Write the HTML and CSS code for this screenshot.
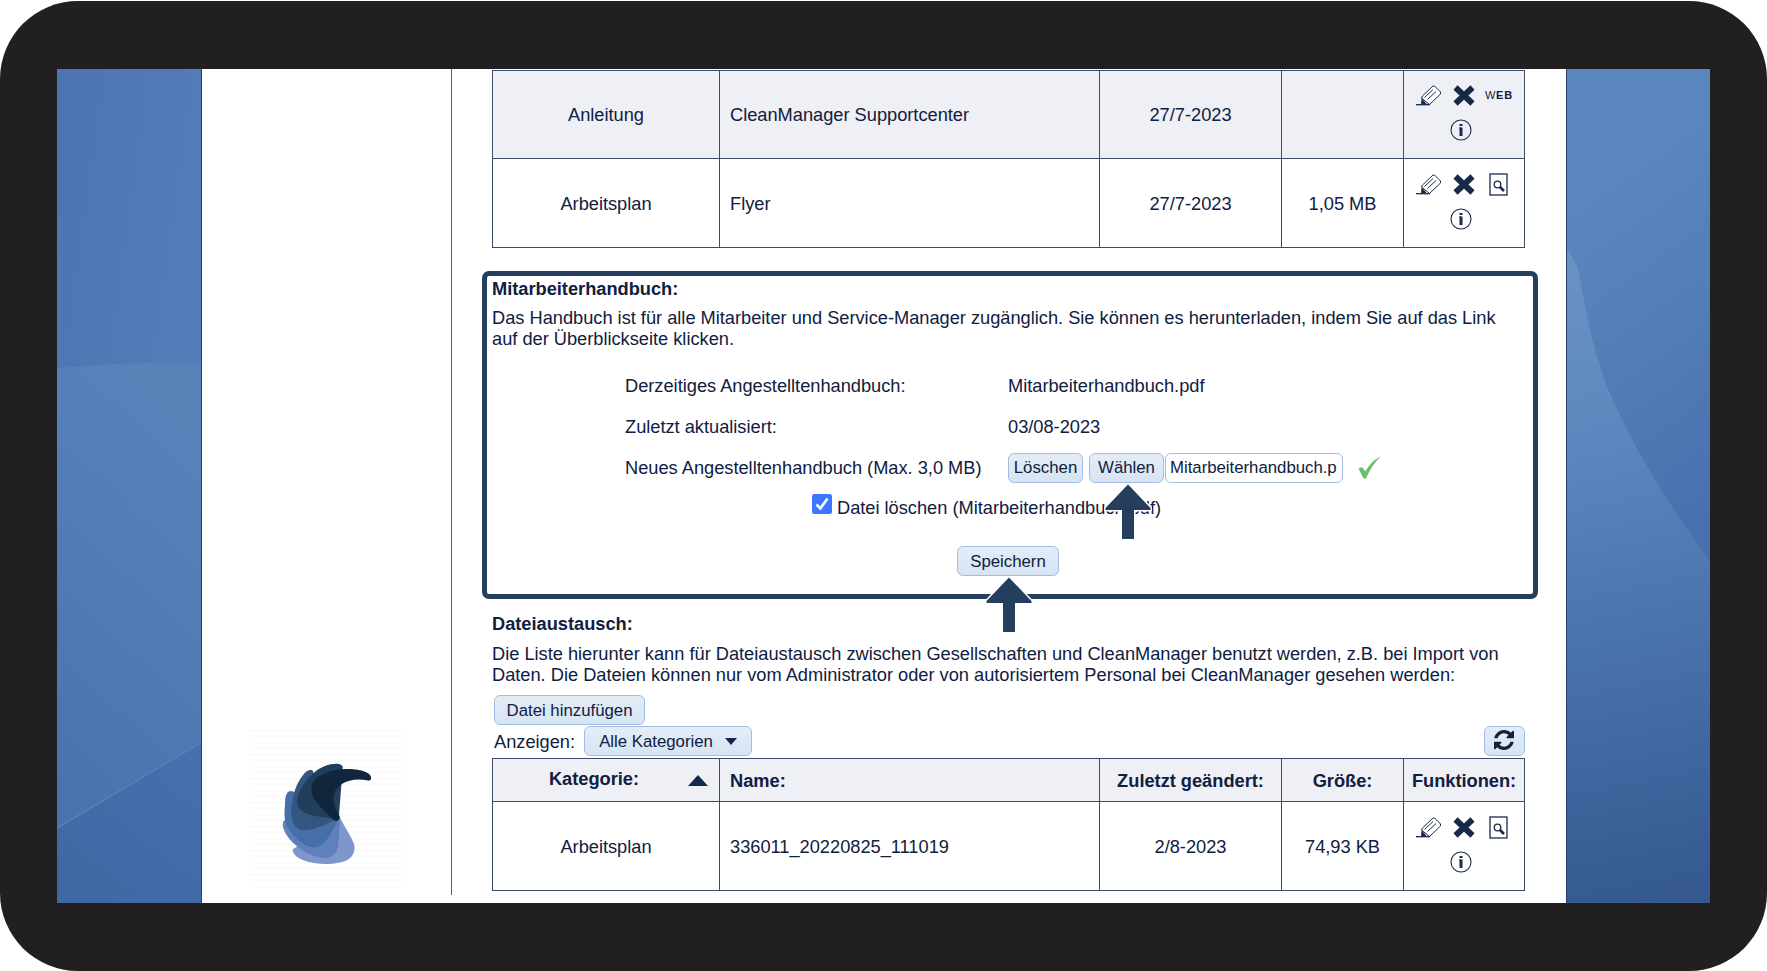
FILE: index.html
```
<!DOCTYPE html>
<html lang="de">
<head>
    <meta charset="UTF-8">
    <title>CleanManager - Dateien</title>
    <link rel="stylesheet" href="styles.css">
</head>
<body>

<svg class="symbols" width="0" height="0">
    <symbol id="edit" viewBox="0 0 25 21">
        <path d="M5.500 13 L6.500 11 L17 1 H18.500 L24.500 7 V9 L13.500 19.500 Z" fill="#fff" stroke="#1a2c4a" stroke-width="1"/>
        <path d="M8.500 12.500 L17 4.500 M11.500 14.500 L20 6.500" fill="none" stroke="#1a2c4a" stroke-width="1"/>
        <path d="M0 19.700 H14" stroke="#1a2c4a" stroke-width="1.300"/>
        <path d="M5.500 13 L11 19.500 H5 Z" fill="#1a2c4a"/>
    </symbol>
    <symbol id="delete" viewBox="0 0 22 21">
        <path d="M2.500 2.500 L19.500 18.500 M19.500 2.500 L2.500 18.500" fill="none" stroke="#172a45" stroke-width="6"/>
    </symbol>
    <symbol id="view" viewBox="0 0 19 23">
        <rect x="1" y="1" width="17" height="21" fill="#fff" stroke="#1a2c4a" stroke-width="1.300"/>
        <circle cx="8.500" cy="11.500" r="3.300" fill="none" stroke="#1a2c4a" stroke-width="1.300"/>
        <path d="M11 14 L15 18" stroke="#1a2c4a" stroke-width="2.600"/>
    </symbol>
    <symbol id="info" viewBox="0 0 22 22">
        <circle cx="11" cy="11" r="10" fill="none" stroke="#1a2c4a" stroke-width="1.100"/>
        <path d="M11 5 V7 M11 8.500 V17" fill="none" stroke="#1a2c4a" stroke-width="3"/>
        <path d="M9 9 H11" fill="none" stroke="#1a2c4a" stroke-width="1"/>
    </symbol>
    <symbol id="arrow" viewBox="0 0 50 60">
        <path d="M25 2.500 L47.500 26 V28 H31 V57 H19 V28 H2.500 V26 Z" fill="#263e5e" stroke="#fff" stroke-width="3" stroke-linejoin="round" paint-order="stroke"/>
    </symbol>
</svg>

<div class="tablet">
    <div class="screen">
        <div class="wallpaper wallpaper-left">
            <svg width="145" height="834" viewBox="0 0 145 834">
                <defs>
                    <linearGradient id="l1" x1="0" y1="0" x2="1" y2="0.300"><stop offset="0" stop-color="#4b74b1"/><stop offset="1" stop-color="#547cb9"/></linearGradient>
                    <linearGradient id="l2" x1="0.600" y1="0" x2="0.300" y2="1"><stop offset="0" stop-color="#5883b9"/><stop offset="0.500" stop-color="#527bb4"/><stop offset="1" stop-color="#4a73ac"/></linearGradient>
                    <linearGradient id="l3" x1="1" y1="0" x2="0.300" y2="1"><stop offset="0" stop-color="#4670af"/><stop offset="1" stop-color="#4068a3"/></linearGradient>
                </defs>
                <rect width="145" height="320" fill="url(#l1)"/>
                <path d="M0 299 Q70 293 145 294 V680 L0 766 Z" fill="url(#l2)"/>
                <path d="M0 759 L145 673 V834 H0 Z" fill="url(#l3)"/>
                <path d="M0 759 L145 673" stroke="#5781b8" stroke-width="1.500"/>
            </svg>
        </div>
        <div class="page">
            <div class="sidebar">
                <div class="logo">
                    <svg width="91" height="104" viewBox="0 0 90 102" preserveAspectRatio="none">
                        <path d="M13 83 C8 84 11 91 20 95 C35 101 56 100 65 95 C71 91 73 85 71 79 C68 71 62 63 57 53 Z" fill="#7d97ca"/>
                        <path d="M3 56 C-2 58 1 70 14 81 C24 90 37 94 45 93 C53 91 56 86 56 76 C57 68 57 62 57 54 Z" fill="#5f80bd"/>
                        <path d="M11 28 C6 26 3 30 3 40 C2 52 2 59 8 67 C17 79 28 85 37 82 C46 76 51 65 56 55 Z" fill="#456fa6"/>
                        <path d="M31 9 C30 5 25 6 20 13 C14 21 11 30 10 40 C8 52 10 66 22 66 C34 66 46 58 56 55 Z" fill="#335680"/>
                        <path d="M60 5 C61 -2 42 0 31 10 C20 20 12 34 16 43 C20 50 32 53 42 53 L56 56 Z" fill="#213e5d"/>
                        <path d="M88 16 C90 10 78 6 66 6 C46 6 28 14 29 27 C30 38 44 48 51 56 C54 58 58 56 57 52 C53 45 50 39 51 32 C53 21 67 14 84 17 C86 18 87 17 88 16 Z" fill="#11263c"/>
                    </svg>
                </div>
            </div>
            <div class="content">
                <table class="files files-top">
                    <tr class="shaded">
                        <td class="category">Anleitung</td>
                        <td class="name">CleanManager Supportcenter</td>
                        <td class="date">27/7-2023</td>
                        <td class="size"></td>
                        <td class="functions">
                            <div class="icons"><svg class="edit"><use href="#edit"/></svg><svg class="delete"><use href="#delete"/></svg><span class="web"><span class="thin">W</span>EB</span></div>
                            <svg class="info"><use href="#info"/></svg>
                        </td>
                    </tr>
                    <tr class="last">
                        <td class="category">Arbeitsplan</td>
                        <td class="name">Flyer</td>
                        <td class="date">27/7-2023</td>
                        <td class="size">1,05 MB</td>
                        <td class="functions">
                            <div class="icons"><svg class="edit"><use href="#edit"/></svg><svg class="delete"><use href="#delete"/></svg><svg class="view"><use href="#view"/></svg></div>
                            <svg class="info"><use href="#info"/></svg>
                        </td>
                    </tr>
                </table>

                <div class="handbook">
                    <h3>Mitarbeiterhandbuch:</h3>
                    <p>Das Handbuch ist für alle Mitarbeiter und Service-Manager zugänglich. Sie können es herunterladen, indem Sie auf das Link<br>auf der Überblickseite klicken.</p>
                    <div class="form">
                        <div class="row"><span class="label">Derzeitiges Angestelltenhandbuch:</span><span>Mitarbeiterhandbuch.pdf</span></div>
                        <div class="row"><span class="label">Zuletzt aktualisiert:</span><span>03/08-2023</span></div>
                        <div class="row">
                            <span class="label">Neues Angestelltenhandbuch (Max. 3,0 MB)</span>
                            <button class="btn btn-clear">Löschen</button>
                            <div class="choose">
                                <button class="btn btn-choose">Wählen</button>
                                <svg class="arrow"><use href="#arrow"/></svg>
                            </div>
                            <span class="filename">Mitarbeiterhandbuch.p</span>
                            <svg class="ok" width="23" height="23" viewBox="0 0 23 23"><path d="M0.500 12.500 L4 11 L7.500 15.500 C11 9 16 3.500 22.500 0.500 C16 7 11.500 14 8 22.500 H5.500 Z" fill="#6cbd6c"/></svg>
                        </div>
                    </div>
                    <div class="remove">
                        <svg width="20" height="20" viewBox="0 0 20 20"><rect width="20" height="20" rx="2.500" fill="#3b78ff"/><path d="M4.500 10.500 L8.300 14.500 L15.500 4.500" fill="none" stroke="#fff" stroke-width="2.700"/></svg>
                        <span>Datei löschen (Mitarbeiterhandbuch.pdf)</span>
                    </div>
                    <div class="save">
                        <button class="btn btn-save">Speichern</button>
                        <svg class="arrow"><use href="#arrow"/></svg>
                    </div>
                </div>

                <div class="exchange">
                    <h3>Dateiaustausch:</h3>
                    <p>Die Liste hierunter kann für Dateiaustausch zwischen Gesellschaften und CleanManager benutzt werden, z.B. bei Import von<br>Daten. Die Dateien können nur vom Administrator oder von autorisiertem Personal bei CleanManager gesehen werden:</p>
                    <button class="btn btn-add">Datei hinzufügen</button>
                    <div class="filter">
                        <span>Anzeigen:</span>
                        <button class="btn btn-category">Alle Kategorien <svg width="12" height="7" viewBox="0 0 12 7"><path d="M0 0 H12 L6 7 Z" fill="#14284b"/></svg></button>
                        <button class="btn btn-refresh">
                            <svg width="20" height="20" viewBox="0 0 1536 1536"><path fill="#10213b" d="M1511 928q0 5-1 7-64 268-268 434.500T764 1536q-146 0-282.500-55T238 1324l-129 129q-19 19-45 19t-45-19-19-45V960q0-26 19-45t45-19h448q26 0 45 19t19 45-19 45l-137 137q71 66 161 102t187 36q134 0 250-65t186-179q11-17 53-117 8-23 30-23h192q13 0 22.500 9.500t9.500 22.500zm25-800v448q0 26-19 45t-45 19h-448q-26 0-45-19t-19-45 19-45l138-138Q969 256 768 256q-134 0-250 65T332 500q-11 17-53 117-8 23-30 23H50q-13 0-22.500-9.500T18 608v-7q65-268 270-434.500T768 0q146 0 284 55.500T1297 212l130-129q19-19 45-19t45 19 19 45z"/></svg>
                        </button>
                    </div>
                </div>

                <table class="files">
                    <tr class="shaded head">
                        <th class="category"><div class="sort"><span>Kategorie:</span><svg width="20" height="11" viewBox="0 0 20 11"><path d="M0 11 L10 0 L20 11 Z" fill="#14284b"/></svg></div></th>
                        <th class="name">Name:</th>
                        <th class="date">Zuletzt geändert:</th>
                        <th class="size">Größe:</th>
                        <th class="functions-head">Funktionen:</th>
                    </tr>
                    <tr class="last">
                        <td class="category">Arbeitsplan</td>
                        <td class="name">336011_20220825_111019</td>
                        <td class="date">2/8-2023</td>
                        <td class="size">74,93 KB</td>
                        <td class="functions">
                            <div class="icons"><svg class="edit"><use href="#edit"/></svg><svg class="delete"><use href="#delete"/></svg><svg class="view"><use href="#view"/></svg></div>
                            <svg class="info"><use href="#info"/></svg>
                        </td>
                    </tr>
                </table>
            </div>
        </div>
        <div class="wallpaper">
            <svg width="144" height="834" viewBox="0 0 144 834">
                <defs>
                    <linearGradient id="r1" gradientUnits="userSpaceOnUse" x1="0" y1="150" x2="190" y2="420"><stop offset="0" stop-color="#5a85bf"/><stop offset="0.500" stop-color="#527cb5"/><stop offset="1" stop-color="#4770ad"/></linearGradient>
                    <linearGradient id="r2" gradientUnits="userSpaceOnUse" x1="0" y1="190" x2="130" y2="834"><stop offset="0" stop-color="#6b92c5"/><stop offset="0.300" stop-color="#5b86bd"/><stop offset="0.600" stop-color="#4971ab"/><stop offset="1" stop-color="#34588f"/></linearGradient>
                </defs>
                <rect width="144" height="834" fill="url(#r1)"/>
                <path d="M0 181 Q9 192 12 204 C18 240 28 290 44 327 C72 390 105 440 144 493 V834 H0 Z" fill="url(#r2)"/>
            </svg>
        </div>
    </div>
</div>

</body>
</html>
```
FILE: styles.css
```
* {
    box-sizing: border-box;
}
body {
    margin: 0;
    height: 971px;
    padding-top: 1px;
    background-color: #fff;
    font-family: "Liberation Sans", Arial, sans-serif;
    font-size: 18.25px;
    line-height: 21px;
    letter-spacing: -0.015px;
    color: #10203f;
    overflow: hidden;
}
svg {
    display: block;
    flex: none;
}
.symbols {
    position: absolute;
}
.tablet {
    height: 970px;
    padding: 68px 57px;
    border-radius: 78px;
    background-color: #221f20;
}
.screen {
    display: flex;
    height: 834px;
    overflow: hidden;
}
.wallpaper {
    width: 143px;
    overflow: hidden;
}
.wallpaper-left {
    width: 144px;
}
.page {
    display: flex;
    flex: 1;
    border-left: 1px solid #263f66;
    border-right: 1px solid #263f66;
    background-color: #fff;
}
.sidebar {
    display: flex;
    align-items: flex-end;
    width: 250px;
    height: 826px;
    padding: 0 0 4px 48px;
    border-right: 1px solid #526078;
}
.logo {
    width: 151px;
    height: 162px;
    padding: 34px 0 0 32px;
    background: repeating-linear-gradient(#fcfcfc 0, #fcfcfc 3px, #fff 3px, #fff 6px);
}
.content {
    width: 1074px;
    padding: 1px 0 0 30px;
}
.files {
    width: 1033px;
    margin-left: 10px;
    border-collapse: collapse;
    table-layout: fixed;
}
.files td, .files th {
    height: 88px;
    padding: 0 9px;
    border: 1px solid #3c4b69;
    text-align: center;
}
.files .last td {
    height: 89px;
}
.files .head th {
    height: 43px;
}
.shaded {
    background-color: #efeff6;
}
.category {
    width: 227px;
}
.files .name {
    width: 380px;
    padding-left: 10px;
    text-align: left;
}
.date {
    width: 182px;
}
.size {
    width: 122px;
}
.files .functions {
    padding: 0 0 4px 12px;
}
.files .functions-head {
    padding: 0;
}
.icons {
    display: flex;
    align-items: center;
    height: 23px;
    margin-bottom: 12px;
}
.edit {
    width: 25px;
    height: 21px;
    margin-right: 12px;
}
.delete {
    width: 22px;
    height: 21px;
    margin-right: 14px;
}
.view {
    width: 19px;
    height: 23px;
}
.web {
    margin-left: -4px;
    font-size: 11px;
    font-weight: bold;
    letter-spacing: 0.700px;
}
.thin {
    font-weight: normal;
}
.info {
    width: 22px;
    height: 22px;
    margin-left: 34px;
}
.handbook {
    width: 1056px;
    height: 328px;
    margin-top: 23px;
    border: 5px solid #263e5e;
    border-radius: 7px;
    padding: 2px 5px;
}
h3 {
    margin: 0;
    font-size: 18.250px;
}
p {
    margin: 8px 0 0;
    white-space: nowrap;
}
.form {
    margin: 16px 0 0 133px;
}
.row {
    display: flex;
    align-items: center;
    height: 41px;
    white-space: nowrap;
}
.label {
    width: 383px;
}
.btn {
    height: 30px;
    padding: 0;
    border: 1px solid #a3bce4;
    border-radius: 6px;
    background: linear-gradient(#e4edf6, #d6e4f3);
    font: inherit;
    font-size: 16.800px;
    color: #10203f;
}
.btn-clear {
    width: 75px;
    margin-right: 6px;
}
.choose, .save {
    position: relative;
}
.btn-choose {
    width: 75px;
}
.arrow {
    position: absolute;
    top: 29px;
    left: 14px;
    width: 50px;
    height: 60px;
}
.filename {
    width: 178px;
    height: 30px;
    margin: 0 15px 0 1px;
    padding: 3px 0 0 4px;
    border: 1px solid #a3bce4;
    border-radius: 6px;
    font-size: 16.800px;
}
.remove {
    display: flex;
    gap: 5px;
    height: 21px;
    margin: 6px 0 0 320px;
}
.remove span {
    padding-top: 3px;
}
.save {
    width: 102px;
    margin: 31px 0 0 465px;
}
.btn-save {
    width: 102px;
}
.save .arrow {
    left: 27px;
}
.exchange {
    padding: 14px 0 0 10px;
}
.exchange p {
    margin-top: 9px;
}
.btn-add {
    display: block;
    width: 151px;
    margin: 10px 0 0 2px;
}
.filter {
    display: flex;
    align-items: center;
    width: 1031px;
    margin: 1px 0 2px 2px;
}
.btn-category {
    display: flex;
    align-items: center;
    justify-content: center;
    gap: 12px;
    width: 168px;
    margin-left: 9px;
}
.btn-refresh {
    width: 41px;
    margin-left: auto;
    padding: 0 0 2px 9px;
}
.sort {
    display: flex;
    align-items: center;
    justify-content: flex-end;
    gap: 49px;
    padding-right: 2px;
}
.sort span {
    padding-bottom: 3px;
}
```
